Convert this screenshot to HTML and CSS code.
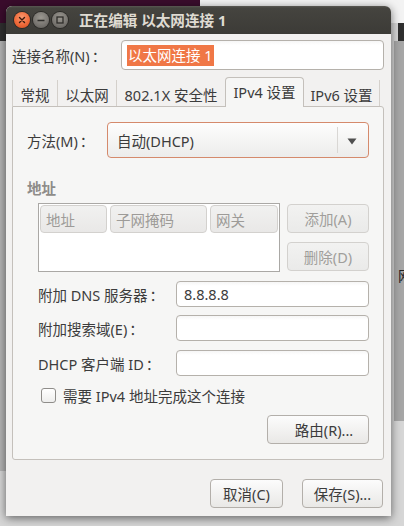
FILE: index.html
```html
<!DOCTYPE html>
<html lang="zh-CN">
<head>
<meta charset="utf-8">
<title>正在编辑 以太网连接 1</title>
<link rel="stylesheet" href="styles.css">
</head>
<body>
<div class="desktop">
  <div class="bd bd-purple"></div>
  <div class="bd bd-white"></div>
  <div class="bd bd-dark-left"></div>
  <div class="bd bd-dark-right"></div>
  <div class="bd bd-gray-left"></div>
  <div class="bd bd-gray-right"></div>
  <div class="bd bd-char">网</div>

  <div class="window">
    <div class="titlebar">
      <div class="wbtns">
        <span class="wbtn close"><svg viewBox="0 0 16 16" width="16" height="16"><path d="M5.5 5.5 L10.5 10.5 M10.5 5.5 L5.5 10.5" stroke="#3a1a0e" stroke-width="1.4" stroke-linecap="round"/></svg></span>
        <span class="wbtn"><svg viewBox="0 0 16 16" width="16" height="16"><path d="M4.5 8.5 H11.5" stroke="#2e2d2a" stroke-width="1.5"/></svg></span>
        <span class="wbtn"><svg viewBox="0 0 16 16" width="16" height="16"><rect x="5" y="5" width="6" height="6" fill="none" stroke="#2e2d2a" stroke-width="1.3"/></svg></span>
      </div>
      <div class="title">正在编辑 以太网连接 1</div>
    </div>

    <div class="content">
      <div class="name-row">
        <label class="name-label">连接名称(N)<span class="colon">：</span></label>
        <div class="entry name-entry"><span class="sel">以太网连接 1</span></div>
      </div>

      <div class="tabs">
        <div class="tab t1">常规</div>
        <div class="tab t2">以太网</div>
        <div class="tab t3">802.1X 安全性</div>
        <div class="tab active t4">IPv4 设置</div>
        <div class="tab t5">IPv6 设置</div>
      </div>

      <div class="page">
        <div class="method-row">
          <label class="method-label">方法(M)<span class="colon">：</span></label>
          <div class="combo">
            <span class="combo-text">自动(DHCP)</span>
            <span class="combo-sep"></span>
            <svg class="combo-arrow" viewBox="0 0 10 7" width="10" height="7"><path d="M0.5 0.5 H9.5 L5 6.5 Z" fill="#4f4f4f"/></svg>
          </div>
        </div>

        <div class="section-title">地址</div>

        <div class="addr">
          <div class="addr-table">
            <div class="addr-head">
              <span class="col c1">地址</span>
              <span class="col c2">子网掩码</span>
              <span class="col c3">网关</span>
            </div>
          </div>
          <div class="addr-btns">
            <div class="btn insensitive">添加(A)</div>
            <div class="btn insensitive">删除(D)</div>
          </div>
        </div>

        <div class="field-row dns-row">
          <label class="field-label">附加 DNS 服务器<span class="colon">：</span></label>
          <div class="entry field-entry">8.8.8.8</div>
        </div>
        <div class="field-row search-row">
          <label class="field-label">附加搜索域(E)<span class="colon">：</span></label>
          <div class="entry field-entry"></div>
        </div>
        <div class="field-row dhcp-row">
          <label class="field-label">DHCP 客户端 ID<span class="colon">：</span></label>
          <div class="entry field-entry"></div>
        </div>

        <div class="check-row">
          <span class="checkbox"></span>
          <span class="check-label">需要 IPv4 地址完成这个连接</span>
        </div>

        <div class="route-row">
          <div class="btn route-btn">路由(R)...</div>
        </div>
      </div>

      <div class="actions">
        <div class="btn cancel-btn">取消(C)</div>
        <div class="btn save-btn">保存(S)...</div>
      </div>
    </div>
  </div>
</div>
</body>
</html>
```

FILE: styles.css
```css
html, body {
  margin: 0;
  padding: 0;
}
body {
  width: 404px;
  height: 526px;
  overflow: hidden;
  background: #d6d6d6;
  font-family: "Noto Sans", "Noto Sans CJK SC", sans-serif;
  font-size: 14.5px;
  color: #3c3c3c;
}
.desktop {
  position: relative;
  width: 404px;
  height: 526px;
  overflow: hidden;
  background: #d6d6d6;
}

/* backdrop pieces of other windows */
.bd { position: absolute; }
.bd-purple { left: 0; top: 0; width: 200px; height: 23px; background: #3a0c2c; }
.bd-white { left: 200px; top: 0; width: 204px; height: 23px; background: #f3f3f3; }
.bd-dark-left { left: 0; top: 23px; width: 10px; height: 18px; background: #2f2f2f; }
.bd-dark-right { left: 398px; top: 23px; width: 6px; height: 18px; background: #2f2f2f; }
.bd-gray-left { left: 0; top: 41px; width: 10px; height: 430px; background: #b4b4b4; }
.bd-gray-right { left: 394px; top: 41px; width: 10px; height: 380px; background: #a6a6a6; }
.bd-char { left: 398px; top: 268px; font-size: 14px; line-height: 16px; color: #222; }

/* full-width colon centred as in the reference */
.colon {
  font-family: "Noto Sans CJK TC", "Noto Sans CJK SC", sans-serif;
  margin-left: 2px;
}

/* window */
.window {
  position: absolute;
  left: 6px;
  top: 6px;
  width: 385px;
  height: 510px;
  background: #f2f1f0;
  border-radius: 6px 6px 0 0;
  box-shadow: 0 2px 10px rgba(0, 0, 0, 0.55);
  display: flex;
  flex-direction: column;
}
.titlebar {
  height: 28px;
  flex: none;
  border-radius: 6px 6px 0 0;
  background: linear-gradient(#5a5852 0, #45443f 2px, #3c3b37 100%);
  display: flex;
  align-items: center;
}
.wbtns {
  display: flex;
  gap: 3px;
  padding-left: 8px;
}
.wbtn {
  width: 16px;
  height: 16px;
  border-radius: 50%;
  box-sizing: border-box;
  background: radial-gradient(circle at 50% 35%, #9b9891 0, #7a7772 55%, #5b5955 100%);
  box-shadow: 0 0 0 1px #2b2a27;
  display: flex;
}
.wbtn.close {
  background: radial-gradient(circle at 50% 35%, #f89a72 0, #ef6a3a 55%, #d24a1b 100%);
}
.title {
  margin-left: 11px;
  color: #dfdbd2;
  font-weight: bold;
  font-size: 14.6px;
  line-height: 20px;
}

.content {
  flex: 1;
  display: flex;
  flex-direction: column;
  padding: 6px 7px 8px 6px;
}

/* entries */
.entry {
  box-sizing: border-box;
  border: 1px solid #b5b1ab;
  border-radius: 4px;
  background: linear-gradient(#f6f6f6 0, #ffffff 4px, #ffffff 100%);
  display: flex;
  align-items: center;
}
.name-row {
  display: flex;
  align-items: center;
  height: 30px;
}
.name-label {
  flex: 1;
}
.name-entry {
  width: 263px;
  height: 30px;
  padding-left: 5px;
}
.sel {
  background: #f07746;
  color: #ffffff;
  line-height: 21px;
  padding: 0 1px;
}

/* tabs */
.tabs {
  margin-top: 7px;
  height: 29px;
  display: flex;
  align-items: flex-end;
  position: relative;
  z-index: 1;
}
.tab {
  box-sizing: border-box;
  height: 26px;
  display: flex;
  align-items: center;
  justify-content: center;
  border-left: 1px solid #d4d0cb;
  white-space: nowrap;
  padding-top: 2px;
}
.tab.t1 { width: 45px; }
.tab.t2 { width: 59px; }
.tab.t3 { width: 109px; }
.tab.t4 { width: 79px; }
.tab.t5 { width: 76px; border-right: 1px solid #d4d0cb; border-left: none; }
.tab.active {
  height: 30px;
  margin-bottom: -1px;
  border: 1px solid #c4c0bb;
  border-bottom: none;
  border-radius: 4px 4px 0 0;
  background: #f6f6f5;
  padding-top: 0;
  padding-bottom: 2px;
}

/* notebook page */
.page {
  box-sizing: border-box;
  height: 354px;
  border: 1px solid #c4c0bb;
  border-radius: 0 3px 3px 3px;
  background: #f6f6f5;
  padding: 15px 14px 0 14px;
  display: flex;
  flex-direction: column;
}
.method-row {
  display: flex;
  align-items: center;
  height: 36px;
}
.method-label {
  width: 80px;
}
.combo {
  box-sizing: border-box;
  flex: 1;
  height: 36px;
  border: 1px solid #d58a6c;
  border-radius: 4px;
  background: linear-gradient(#fdfdfd, #ececeb);
  display: flex;
  align-items: center;
  padding-left: 9px;
  padding-right: 11px;
}
.combo-text { flex: 1; }
.combo-sep {
  width: 1px;
  height: 26px;
  background: #d9d7d4;
  margin-right: 9px;
}
.combo-arrow { margin-top: 2px; }

.section-title {
  margin-top: 20px;
  line-height: 20px;
  font-weight: bold;
  color: #8e8c89;
}

.addr {
  margin-top: 5px;
  margin-left: 11px;
  display: flex;
  gap: 7px;
}
.addr-table {
  box-sizing: border-box;
  width: 242px;
  height: 69px;
  border: 1px solid #aaa8a5;
  background: #ffffff;
  padding: 1px;
}
.addr-head {
  display: flex;
  gap: 3px;
}
.col {
  box-sizing: border-box;
  height: 28px;
  border: 1px solid #d3d1ce;
  border-radius: 4px;
  background: linear-gradient(#f1f1f0, #e9e8e7);
  color: #9d9b98;
  display: flex;
  align-items: center;
  padding-left: 5px;
}
.col.c1 { width: 67px; }
.col.c2 { width: 97px; }
.col.c3 { width: 68px; }
.addr-btns {
  padding-top: 1px;
  display: flex;
  flex-direction: column;
  gap: 9px;
}

/* buttons */
.btn {
  box-sizing: border-box;
  height: 29px;
  border: 1px solid #b3afaa;
  border-radius: 4px;
  background: linear-gradient(#fcfcfc, #e9e8e6);
  display: flex;
  align-items: center;
  justify-content: center;
  white-space: nowrap;
}
.btn.insensitive {
  width: 82px;
  border-color: #d3d1ce;
  background: linear-gradient(#f2f2f1, #eaeae9);
  color: #a09e9b;
}

.field-row {
  display: flex;
  align-items: center;
  margin-left: 11px;
  height: 26px;
}
.dns-row { margin-top: 9px; }
.search-row { margin-top: 8px; }
.dhcp-row { margin-top: 9px; }
.field-label { width: 138px; white-space: nowrap; }
.field-entry {
  flex: 1;
  height: 26px;
  padding-left: 7px;
}

.check-row {
  margin-top: 12px;
  margin-left: 14px;
  display: flex;
  align-items: center;
  height: 15px;
  gap: 7px;
}
.checkbox {
  box-sizing: border-box;
  width: 15px;
  height: 15px;
  border: 1px solid #8f8d8a;
  border-radius: 3px;
  background: linear-gradient(#ffffff, #eeeeed);
}

.route-row {
  margin-top: 12px;
  display: flex;
  justify-content: flex-end;
}
.route-btn {
  width: 102px;
  padding-left: 12px;
}

.actions {
  margin-top: 19px;
  display: flex;
  justify-content: flex-end;
  gap: 19px;
  padding-right: 1px;
}
.cancel-btn { width: 73px; }
.save-btn { width: 81px; }
```
